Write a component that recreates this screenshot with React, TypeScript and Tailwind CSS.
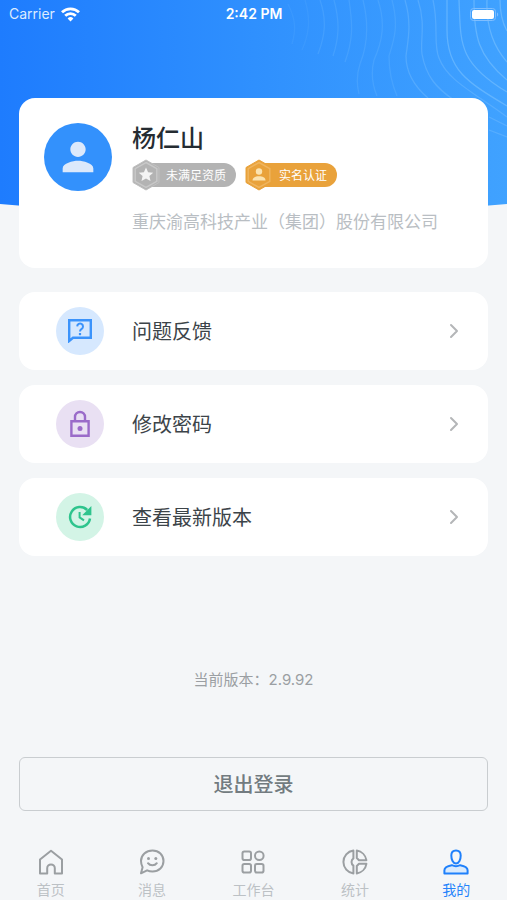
import React from 'react';
import { MdPerson } from 'react-icons/md';
import { ChevronRight } from 'lucide-react';

const FeedbackIcon: React.FC = () => (
  <svg className="w-6 h-6" viewBox="0 0 24 24" fill="none" stroke="#3b93fb" strokeWidth="2.4">
    <path d="M1.2 1.2h21.6v17.6H5L1.2 22z" />
    <path d="M9.2 7.4a2.9 2.9 0 1 1 4.5 2.5c-1.100.7-1.700 1.200-1.700 2.600" strokeWidth="2" />
    <path d="M12 14v2.200" strokeWidth="2.2" />
  </svg>
);

const LockIcon: React.FC = () => (
  <svg className="w-6 h-7" viewBox="0 0 24 28" fill="none" stroke="#9a6bc9" strokeWidth="2.4">
    <path d="M3.4 11.2h17.2v14.6H3.4z" />
    <path d="M7 11V7a5 5 0 0 1 10 0v4" />
    <circle cx="12" cy="18.5" r="2.5" fill="#9a6bc9" stroke="none" />
  </svg>
);

const UpdateIcon: React.FC = () => (
  <svg className="w-6 h-6" viewBox="0 0 24 24" fill="none" stroke="#2ec48d" strokeWidth="2.5">
    <path d="M19.2 5A10 10 0 1 0 22 13.5" />
    <path d="M23.4 1v9.2h-9.2z" fill="#2ec48d" stroke="none" />
    <path d="M11.6 7v5.4l4.4 3" strokeWidth="2" />
  </svg>
);

const tabs = [
  {
    label: '首页',
    icon: <path d="M2 10.5 13 1.8l11 8.7v14.1h-7.2v-5.4a3.8 3.8 0 0 0-7.6 0v5.4H2z" />,
  },
  {
    label: '消息',
    icon: (
      <>
        <path d="M13.5 1.5c6.4 0 11 4.6 11 10.5s-4.6 10.5-11 10.5c-2 0-3.8-.4-5.4-1.2L2 24.3l1.6-6C2.7 16.5 2 14.3 2 12 2 6.1 7.1 1.5 13.5 1.5z" />
        <path d="M9 14.2c2 2.8 6.8 2.8 8.800 0" />
        <circle cx="9.5" cy="9.5" r="1.5" fill="currentColor" stroke="none" />
        <circle cx="16.8" cy="9.5" r="1.5" fill="currentColor" stroke="none" />
      </>
    ),
  },
  {
    label: '工作台',
    icon: (
      <>
        <rect x="2.5" y="2.5" width="8.5" height="8.5" rx="1.8" />
        <rect x="2.5" y="15" width="8.5" height="8.500" rx="1.8" />
        <rect x="15" y="15" width="8.5" height="8.5" rx="1.8" />
        <circle cx="19.3" cy="6.8" r="4.3" />
      </>
    ),
  },
  {
    label: '统计',
    icon: (
      <>
        <path d="M11.4 1.6v7.800a4.400 4.400 0 0 0 0 7.200v7.800a11.500 11.500 0 0 1 0-22.800z" />
        <path d="M14.8 1.6a11.5 11.500 0 0 1 9.6 9.6h-7.400L14.800 9z" />
        <path d="M24.4 14.8a11.5 11.500 0 0 1-9.6 9.6V17l2.200-2.200z" />
      </>
    ),
  },
  {
    label: '我的',
    active: true,
    icon: (
      <>
        <path d="M13 1.500c3 0 4.700 2 4.700 5 0 4-1.700 8-4.700 8s-4.700-4-4.700-8c0-3 1.700-5 4.700-5z" />
        <path
          fill="#d9eafd"
          d="M8.8 16.200c2.600 1.200 5.800 1.200 8.400 0 3.300.6 7.400 1.600 7.400 5v3.400H1.400v-3.400c0-3.400 4.100-4.400 7.400-5z"
        />
      </>
    ),
  },
];

const menu = [
  { label: '问题反馈', tint: 'bg-[#d6e8fe]', icon: <FeedbackIcon /> },
  { label: '修改密码', tint: 'bg-[#e9e0f3]', icon: <LockIcon /> },
  { label: '查看最新版本', tint: 'bg-[#d3f4e6]', icon: <UpdateIcon /> },
];

const Badge: React.FC<{ label: string; verified?: boolean }> = ({ label, verified }) => (
  <div className="flex items-center">
    <svg className="relative z-10 w-7 h-8" viewBox="0 0 28 32">
      <path
        d="M14 1 27 8.500v15L14 31 1 23.500v-15z"
        fill={verified ? '#e9a23b' : '#b3b3b3'}
        stroke={verified ? '#e9a23b' : '#c0c0c0'}
      />
      <path
        d="M14 3.500 24.800 9.700v12.600L14 28.500 3.200 22.300V9.700z"
        fill="none"
        stroke={verified ? '#efb55f' : '#c8c8c8'}
        strokeWidth="1.500"
      />
      {verified ? (
        <g fill="#fbe3b0">
          <circle cx="14" cy="12.500" r="3.200" />
          <path d="M7.500 21.500c0-3 3-4.200 6.500-4.200s6.500 1.200 6.500 4.200z" />
        </g>
      ) : (
        <path
          fill="#f4f4f4"
          d="m14 8.500 2.100 4.700 5.100.5-3.800 3.400 1.100 5-4.500-2.600-4.500 2.600 1.100-5-3.800-3.400 5.100-.5z"
        />
      )}
    </svg>
    <span
      className={`-ml-4 h-6 rounded-r-full pl-[22px] pr-2.5 text-xs leading-6 text-white whitespace-nowrap ${
        verified ? 'bg-[#e9a23b]' : 'bg-[#b3b3b3]'
      }`}
    >
      {label}
    </span>
  </div>
);

const Header: React.FC = () => (
  <header className="relative h-[216px]">
    {/* Blue backdrop with a curved lower edge */}
    <svg className="absolute inset-0 w-full h-full" viewBox="0 0 507 216" preserveAspectRatio="none">
      <defs>
        <linearGradient id="sky" x1="0" y1="0" x2="1" y2="0">
          <stop offset="0" stopColor="#1e7cfe" />
          <stop offset="0.5" stopColor="#2f90fe" />
          <stop offset="1" stopColor="#40a2ff" />
        </linearGradient>
      </defs>
      <path d="M0 0H507V204Q253 228 0 204z" fill="url(#sky)" />
    </svg>
    {/* Contour lines */}
    <svg
      className="absolute top-0 right-0 w-[220px] h-[150px]"
      viewBox="287 0 220 150"
      fill="none"
      stroke="#8ccbff"
      strokeWidth="1.3"
    >
      <g strokeOpacity="0.45">
        <path d="M500 0c0 12 2 22 7 31" />
        <path d="M487 0c-1 24 6 46 20 62" />
        <path d="M474 0c0 36 4 56 33 80" />
        <path d="M459 0c2 42-2 62 48 92" />
        <path d="M447 0v30c0 40 20 52 60 76" />
      </g>
      <g strokeOpacity="0.3">
        <path d="M433 0c6 26 0 44 6 58 8 22 34 34 68 59" />
        <path d="M418 0c8 24 2 40 4 54 4 22 14 34 32 46" />
        <path d="M405 0c7 24 3 40 1 56 0 16 8 30 22 42" />
        <path d="M489 117l18 9" />
        <path d="M489 130l18 7" />
      </g>
      <g strokeOpacity="0.18">
        <path d="M392 0c7 26 2 40-3 56 0 14 2 26 8 40" />
        <path d="M378 0c8 24 4 42-4 60-3 12-2 24 3 36" />
        <path d="M363 0c6 24 5 44-3 64-4 12-3 22-1 30" />
        <path d="M349 0c4 26 4 40-4 62" />
        <path d="M334 0c6 22 5 38-1 56" />
        <path d="M320 0c7 20 5 36-2 54" />
      </g>
      <g strokeOpacity="0.1">
        <path d="M305 0c6 20 4 34-3 50" />
        <path d="M288 4c8 16 8 26 4 40" />
      </g>
    </svg>

    <div className="relative grid grid-cols-3 items-center h-7 pl-[9px] pr-2 text-white text-sm font-['Inter',sans-serif]">
      <div className="flex items-center gap-1.5 text-[#dcebff]">
        Carrier
        <svg className="w-[19px] h-[15px]" viewBox="0 0 19 15" fill="none" stroke="#fff" strokeWidth="2.8">
          <path d="M1 5.3a12.2 12.2 0 0 1 17 0" />
          <path d="M4.2 8.8a7.6 7.6 0 0 1 10.6 0" />
          <path d="M9.5 14.5l-2.900-3a4.200 4.200 0 0 1 5.800 0z" fill="#fff" stroke="none" />
        </svg>
      </div>
      <div className="text-center font-semibold">2:42 PM</div>
      <svg className="justify-self-end w-[29px] h-[13px]" viewBox="0 0 29 13">
        <rect x="0.5" y="0.5" width="25" height="12" rx="3" fill="none" stroke="#7fbeff" />
        <rect x="2" y="2" width="22" height="9" rx="2" fill="#fff" />
        <path d="M27 4.5c1.6.6 1.6 3.4 0 4z" fill="#7fbeff" />
      </svg>
    </div>
  </header>
);

const App: React.FC = () => {
  return (
    <div className="min-h-screen flex flex-col bg-[#f4f6f8] font-['Noto_Sans_CJK_SC',sans-serif]">
      <Header />

      <main className="flex-1 flex flex-col px-[19px]">
        <section className="relative -mt-[118px] h-[170px] flex gap-5 rounded-2xl bg-white px-[25px] pt-[25px]">
          <div className="w-[68px] h-[68px] shrink-0 flex items-center justify-center rounded-full bg-[#3391fc] text-[#dce9fb]">
            <MdPerson size={46} />
          </div>
          <div className="min-w-0">
            <h1 className="text-2xl leading-7 font-medium text-[#252c32]">杨仁山</h1>
            <div className="mt-2 flex gap-[9px]">
              <Badge label="未满足资质" />
              <Badge label="实名认证" verified />
            </div>
            <p className="mt-[18px] text-[17px] leading-6 text-[#b9bec3] whitespace-nowrap">
              重庆渝高科技产业（集团）股份有限公司
            </p>
          </div>
        </section>

        <nav className="mt-6 flex flex-col gap-[15px]">
          {menu.map((item) => (
            <a key={item.label} href="#" className="flex items-center h-[78px] rounded-2xl bg-white pl-[37px] pr-[22px]">
              <span className={`w-12 h-12 flex items-center justify-center rounded-full ${item.tint}`}>
                {item.icon}
              </span>
              <span className="ml-7 flex-1 text-xl text-[#3c4449]">{item.label}</span>
              <ChevronRight size={24} className="text-[#b4b6b8]" />
            </a>
          ))}
        </nav>

        <p className="mt-[114px] text-center text-[15px] leading-5 text-[#9b9fa3] font-['Inter','Noto_Sans_CJK_SC',sans-serif]">
          当前版本：2.9.92
        </p>

        <button className="mt-[67px] h-[54px] rounded-md border border-[#c9cdd0] text-xl font-medium text-[#727b80]">
          退出登录
        </button>
      </main>

      <nav className="mt-9 pb-px grid grid-cols-5">
        {tabs.map((tab) => (
          <a
            key={tab.label}
            href="#"
            className={`flex flex-col items-center gap-1 ${tab.active ? 'text-[#2584fb]' : 'text-[#bcc1c5]'}`}
          >
            <svg
              className={`w-[26px] h-[26px] ${tab.active ? 'text-[#1f80fb]' : 'text-[#9b9fa2]'}`}
              viewBox="0 0 26 26"
              fill="none"
              stroke="currentColor"
              strokeWidth="2"
              strokeLinejoin="round"
              strokeLinecap="round"
            >
              {tab.icon}
            </svg>
            <span className="text-sm leading-5">{tab.label}</span>
          </a>
        ))}
      </nav>
    </div>
  );
};

export default App;
